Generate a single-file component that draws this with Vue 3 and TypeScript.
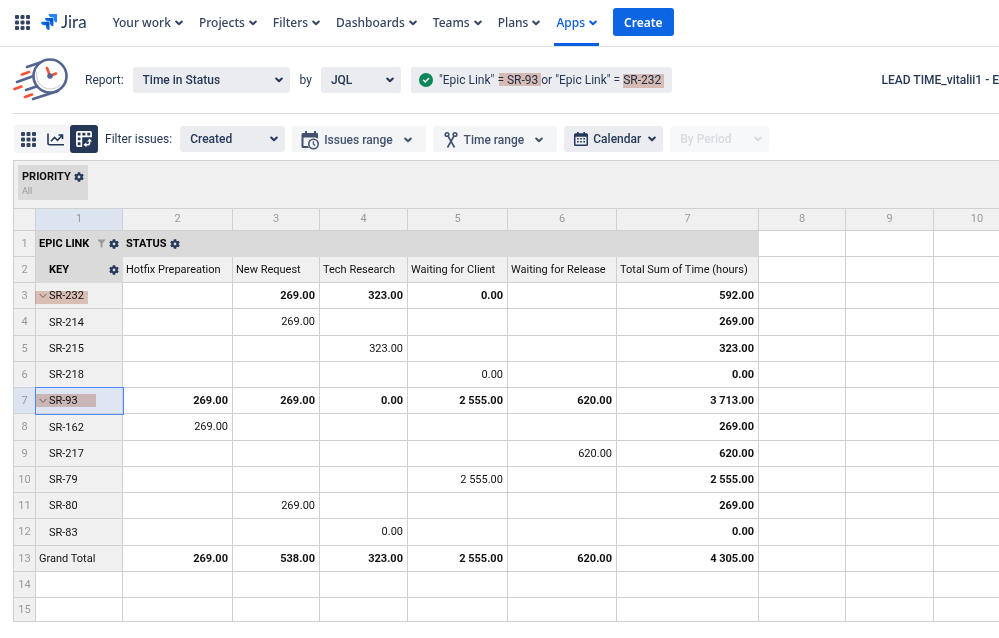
<script setup lang="ts">
import { ref } from 'vue'

interface Row {
  label: string
  kind: 'group' | 'item' | 'total'
  values: string[]
  mark?: string
  selected?: boolean
}

const navItems = ['Your work', 'Projects', 'Filters', 'Dashboards', 'Teams', 'Plans', 'Apps']
const activeNav = 'Apps'

const report = ref('Time in Status')
const source = ref('JQL')
const query = ref('"Epic Link" = SR-93 or "Epic Link" = SR-232')
const issueFilter = ref('Created')
const calendar = ref('Calendar')
const period = ref('By Period')

const columns = [1, 2, 3, 4, 5, 6, 7, 8, 9, 10]
const statuses = [
  'Hotfix Prepareation',
  'New Request',
  'Tech Research',
  'Waiting for Client',
  'Waiting for Release',
  'Total Sum of Time (hours)',
]

const rows: Row[] = [
  { label: 'SR-232', kind: 'group', mark: 'mark-first', values: ['', '269.00', '323.00', '0.00', '', '592.00'] },
  { label: 'SR-214', kind: 'item', values: ['', '269.00', '', '', '', '269.00'] },
  { label: 'SR-215', kind: 'item', values: ['', '', '323.00', '', '', '323.00'] },
  { label: 'SR-218', kind: 'item', values: ['', '', '', '0.00', '', '0.00'] },
  { label: 'SR-93', kind: 'group', mark: 'mark-second', selected: true, values: ['269.00', '269.00', '0.00', '2 555.00', '620.00', '3 713.00'] },
  { label: 'SR-162', kind: 'item', values: ['269.00', '', '', '', '', '269.00'] },
  { label: 'SR-217', kind: 'item', values: ['', '', '', '', '620.00', '620.00'] },
  { label: 'SR-79', kind: 'item', values: ['', '', '', '2 555.00', '', '2 555.00'] },
  { label: 'SR-80', kind: 'item', values: ['', '269.00', '', '', '', '269.00'] },
  { label: 'SR-83', kind: 'item', values: ['', '', '0.00', '', '', '0.00'] },
  { label: 'Grand Total', kind: 'total', values: ['269.00', '538.00', '323.00', '2 555.00', '620.00', '4 305.00'] },
]
const emptyRows = [14, 15]

const gearPath =
  'M6.200 1h3.600l.4 2 1.300.7 1.900-.7 1.700 3-1.500 1.300v1.400l1.500 1.300-1.700 3-1.900-.7-1.300.7-.4 2H6.200l-.4-2-1.300-.7-1.900.7-1.700-3L2.400 8.700V7.300L.900 6l1.700-3 1.900.7L5.800 3zM8 5.900a2.100 2.100 0 1 0 0 4.200 2.100 2.100 0 0 0 0-4.200z'
</script>

<template>
  <div class="page">
    <header class="topbar">
      <button class="plain" aria-label="Switch apps">
        <svg class="dots" viewBox="0 0 15 15">
          <template v-for="y in 3" :key="y">
            <rect v-for="x in 3" :key="x" :x="(x - 1) * 5.5" :y="(y - 1) * 5.5" width="4" height="4" rx="1" />
          </template>
        </svg>
      </button>
      <a class="brand" href="#">
        <svg class="brand-mark" viewBox="0 0 16 16">
          <defs>
            <linearGradient id="fade" x1="1" y1="0" x2="0" y2="1">
              <stop offset="0.2" stop-color="#0052cc" />
              <stop offset="0.8" stop-color="#2684ff" />
            </linearGradient>
          </defs>
          <path d="M15.500 0H7.800a3.500 3.500 0 0 0 3.500 3.500h1.400v1.400a3.500 3.500 0 0 0 3.500 3.400V.700a.7.7 0 0 0-.7-.7z" fill="#2684ff" />
          <path d="M11.700 3.900H4a3.500 3.500 0 0 0 3.500 3.400h1.400v1.400a3.500 3.500 0 0 0 3.500 3.500V4.600a.7.7 0 0 0-.7-.7z" fill="url(#fade)" />
          <path d="M7.800 7.700H.100a3.500 3.500 0 0 0 3.500 3.500H5v1.300A3.500 3.500 0 0 0 8.500 16V8.400a.7.7 0 0 0-.7-.7z" fill="url(#fade)" />
        </svg>
        <span>Jira</span>
      </a>
      <nav class="nav">
        <button v-for="item in navItems" :key="item" class="nav-item" :class="{ active: item === activeNav }">
          {{ item }}
          <svg class="chev" viewBox="0 0 8 8"><path d="M1.200 2.500 4 5.300l2.800-2.800" /></svg>
        </button>
      </nav>
      <button class="create">Create</button>
    </header>

    <section class="report-bar">
      <svg class="clock-logo" viewBox="0 0 56 44">
        <g fill="none" stroke-linecap="round" stroke-width="2.600">
          <g stroke="#53648f">
            <path d="M14 9 33 2.500M4 24l18-6.500M13 32l12-4M20 41l25-8" />
            <circle cx="37" cy="18" r="16.500" fill="#fff" />
          </g>
          <path d="M23.800 14a14 14 0 0 0 23 13.500" stroke="#c9cbd3" stroke-width="1" />
          <path d="M9 16.500l7-2.500M1.500 31l7-2.500M12 39l7-2.500M34 10l3 8M37 18l6-2.500" stroke="#ff5130" />
          <circle cx="37" cy="18" r="2.800" fill="#53648f" />
        </g>
      </svg>
      <label for="report" class="lead">Report:</label>
      <span class="picker wide">
        <select id="report" v-model="report"><option>Time in Status</option></select>
        <svg class="chev" viewBox="0 0 8 8"><path d="M1.200 2.500 4 5.300l2.800-2.800" /></svg>
      </span>
      <label for="source" class="lead">by</label>
      <span class="picker short">
        <select id="source" v-model="source"><option>JQL</option></select>
        <svg class="chev" viewBox="0 0 8 8"><path d="M1.200 2.500 4 5.300l2.800-2.800" /></svg>
      </span>
      <span class="query">
        <svg class="check" viewBox="0 0 14 14">
          <circle cx="7" cy="7" r="7" fill="#0a875a" />
          <path d="m4.500 7.200 1.800 1.700 3.300-3.400" fill="none" stroke="#fff" stroke-width="1.500" stroke-linecap="round" />
        </svg>
        <input v-model="query" type="text" aria-label="JQL query" />
        <i class="marker query-mark-a"></i>
        <i class="marker query-mark-b"></i>
      </span>
      <strong class="title">LEAD TIME_vitalii1 - E</strong>
    </section>

    <section class="toolbar">
      <div class="views">
        <button aria-label="Table view">
          <svg class="dots" viewBox="0 0 15 15">
            <template v-for="y in 3" :key="y">
              <rect v-for="x in 3" :key="x" :x="(x - 1) * 5.5" :y="(y - 1) * 5.5" width="4" height="4" rx="1" />
            </template>
          </svg>
        </button>
        <button aria-label="Chart view">
          <svg class="line-icon" viewBox="0 0 18 14">
            <path d="M1 1.500v9.500q0 1.700 1.700 1.700H17M4 9.300l3.500-4 3 3L15 3.500M11.500 3H15.500v4" />
          </svg>
        </button>
        <button class="on" aria-label="Pivot view">
          <svg class="pivot-icon" viewBox="0 0 17 17">
            <path
              fill="currentColor"
              fill-rule="evenodd"
              d="M1 2.500Q1 1 2.500 1h12Q16 1 16 2.500V6.800H6.800V16H2.500Q1 16 1 14.500zM2.600 2.600v2.700h2.600V2.600zM7 2.600v2.700h2.800V2.600zM11.600 2.600v2.700h2.800V2.600zM2.600 7v2.700h2.600V7zM2.600 11.500v2.900h2.600v-2.900z"
            />
            <path d="M9.500 14h2.300q2 0 2-2V9.700" fill="none" stroke="currentColor" stroke-width="1.400" />
            <path d="M8 14l2.800-2.300v4.600zM13.800 8l2.300 2.800h-4.600z" fill="currentColor" />
          </svg>
        </button>
      </div>
      <label for="filter">Filter issues:</label>
      <span class="picker medium">
        <select id="filter" v-model="issueFilter"><option>Created</option></select>
        <svg class="chev" viewBox="0 0 8 8"><path d="M1.200 2.500 4 5.300l2.800-2.800" /></svg>
      </span>
      <button class="range">
        <svg class="range-icon" viewBox="0 0 19 19">
          <path d="M4 0h2v2h7V0h2v2h1q1 0 1 1v4.500a7 7 0 0 0-2-.5V6.500H2.500V15H7a7 7 0 0 0 1 2H2q-1.500 0-1.500-1.500V3.500Q.500 2 2 2h2z" />
          <path d="M12.500 7.500a5.500 5.500 0 1 0 0 11 5.500 5.500 0 0 0 0-11zm0 1.600a3.900 3.900 0 1 1 0 7.800 3.900 3.900 0 0 1 0-7.800zm-.7 1.200v3.200l2 1.500.8-1-1.500-1.100v-2.600z" />
        </svg>
        Issues range
        <svg class="chev" viewBox="0 0 8 8"><path d="M1.200 2.500 4 5.300l2.800-2.800" /></svg>
      </button>
      <button class="range">
        <svg class="line-icon" viewBox="0 0 16 18">
          <circle cx="4" cy="3.500" r="1.800" /><circle cx="12" cy="3.500" r="1.800" />
          <path d="m5 5 6.500 11.500M11 5 4.500 16.500" />
        </svg>
        Time range
        <svg class="chev" viewBox="0 0 8 8"><path d="M1.200 2.500 4 5.300l2.800-2.800" /></svg>
      </button>
      <span class="picker with-icon">
        <svg class="cal" viewBox="0 0 14 14">
          <path fill-rule="evenodd" d="M3 0h1.600v1.300h4.800V0H11v1.300h1.500q1.500 0 1.500 1.500v9.700q0 1.500-1.500 1.500h-11Q0 14 0 12.500V2.800q0-1.500 1.500-1.500H3zM1.500 4.800v7.700h11V4.800z" />
          <path d="M3 6h1.700v1.600H3zM6.100 6h1.700v1.600H6.100zM9.300 6H11v1.600H9.300zM3 9h1.700v1.600H3zM6.100 9h1.700v1.600H6.100zM9.300 9H11v1.600H9.300z" />
        </svg>
        <select v-model="calendar" aria-label="Calendar"><option>Calendar</option></select>
        <svg class="chev" viewBox="0 0 8 8"><path d="M1.200 2.500 4 5.300l2.800-2.800" /></svg>
      </span>
      <span class="picker off">
        <select v-model="period" aria-label="Period" disabled><option>By Period</option></select>
        <svg class="chev" viewBox="0 0 8 8"><path d="M1.200 2.500 4 5.300l2.800-2.800" /></svg>
      </span>
    </section>

    <main class="pivot">
      <div class="filters">
        <div class="chip">
          <div class="chip-name">
            PRIORITY
            <button class="plain" aria-label="Priority settings">
              <svg class="gear" viewBox="0.500 0.500 15 15"><path fill-rule="evenodd" :d="gearPath" /></svg>
            </button>
          </div>
          <div class="chip-value">All</div>
        </div>
      </div>

      <table class="grid">
        <colgroup>
          <col class="w-index" />
          <col v-for="c in columns" :key="c" :class="'w-' + c" />
        </colgroup>
        <thead>
          <tr>
            <th></th>
            <th v-for="c in columns" :key="c" scope="col" :class="{ lit: c === 1 }">{{ c }}</th>
          </tr>
        </thead>
        <tbody>
          <tr>
            <th class="index">1</th>
            <th class="field">
              <div class="field-row">
                <span class="grow">EPIC LINK</span>
                <svg class="funnel" viewBox="0 0 10 10"><path d="M.500.500h9L6 5v4.500H4V5z" /></svg>
                <button class="plain" aria-label="Epic link settings">
                  <svg class="gear" viewBox="0.500 0.500 15 15"><path fill-rule="evenodd" :d="gearPath" /></svg>
                </button>
              </div>
            </th>
            <th class="field" colspan="6">
              <div class="field-row">
                STATUS
                <button class="plain" aria-label="Status settings">
                  <svg class="gear" viewBox="0.500 0.500 15 15"><path fill-rule="evenodd" :d="gearPath" /></svg>
                </button>
              </div>
            </th>
            <td v-for="c in 3" :key="c"></td>
          </tr>
          <tr>
            <th class="index">2</th>
            <th class="field">
              <div class="field-row">
                <span class="grow indent">KEY</span>
                <button class="plain" aria-label="Key settings">
                  <svg class="gear" viewBox="0.500 0.500 15 15"><path fill-rule="evenodd" :d="gearPath" /></svg>
                </button>
              </div>
            </th>
            <th v-for="s in statuses" :key="s" class="label" scope="col">{{ s }}</th>
            <td v-for="c in 3" :key="c"></td>
          </tr>
          <tr v-for="(row, i) in rows" :key="row.label" :class="row.kind">
            <th class="index" :class="{ lit: row.selected }">{{ i + 3 }}</th>
            <th class="label" :class="{ selected: row.selected }" scope="row">
              <div class="label-row">
                <button v-if="row.kind === 'group'" class="toggle" :aria-label="'Collapse ' + row.label">
                  <svg viewBox="0 0 8 8"><path d="M.700 2 4 5.500 7.300 2" /></svg>
                </button>
                <span>{{ row.label }}</span>
                <i v-if="row.mark" class="marker" :class="row.mark"></i>
              </div>
            </th>
            <td v-for="(v, n) in row.values" :key="n">{{ v }}</td>
            <td v-for="c in 3" :key="'x' + c"></td>
          </tr>
          <tr v-for="n in emptyRows" :key="n">
            <th class="index">{{ n }}</th>
            <td v-for="c in columns" :key="c"></td>
          </tr>
        </tbody>
      </table>
    </main>
  </div>
</template>

<style>
body {
  margin: 0;
  background: #fff;
}
</style>

<style scoped>
* {
  box-sizing: border-box;
}
.page {
  overflow: hidden;
  font-family: Roboto, 'Liberation Sans', sans-serif;
  font-size: 12px;
  color: #253858;
}
button,
select,
input {
  font: inherit;
  color: inherit;
  border: 0;
  background: none;
  padding: 0;
  margin: 0;
}
svg {
  display: block;
  flex: none;
}
.plain {
  display: flex;
}
.dots {
  width: 15px;
  height: 15px;
  fill: #344563;
}
.chev {
  width: 8px;
  height: 8px;
  fill: none;
  stroke: currentColor;
  stroke-width: 2;
  stroke-linecap: round;
  stroke-linejoin: round;
}

.topbar {
  display: flex;
  align-items: center;
  height: 47px;
  padding: 0 15px 2px;
  border-bottom: 1px solid #dfe2e5;
}
.brand {
  display: flex;
  align-items: center;
  gap: 4px;
  margin-left: 11px;
  color: #253858;
  font-family: Lato, sans-serif;
  font-size: 17px;
  line-height: 20px;
  text-decoration: none;
}
.brand-mark {
  width: 16px;
  height: 16px;
}
.nav {
  display: flex;
  gap: 12px;
  height: 46px;
  margin: 2px 0 0 24px;
}
.nav-item {
  display: flex;
  align-items: center;
  gap: 4px;
  padding: 2px 2px 0;
  border-bottom: 3px solid transparent;
  font-family: 'Noto Sans', sans-serif;
  font-size: 12px;
  font-weight: 500;
  color: #344563;
}
.nav-item.active {
  color: #0c5ce0;
  border-color: #0c5ce0;
}
.create {
  height: 28px;
  margin-left: 14px;
  padding: 0 11px;
  border-radius: 3px;
  background: #0c66e4;
  color: #fff;
  font-family: 'Noto Sans', sans-serif;
  font-size: 12px;
  font-weight: 600;
}

.report-bar {
  display: flex;
  align-items: center;
  height: 67px;
  margin-left: 13px;
  border-bottom: 1px solid #d9d9d9;
}
.clock-logo {
  width: 56px;
  height: 44px;
  margin-right: 16px;
}
.lead {
  margin-right: 9px;
}
.picker {
  display: flex;
  align-items: center;
  height: 26px;
  margin-right: 10px;
  padding: 0 7px 0 10px;
  border-radius: 3px;
  background: #ebecf0;
  font-weight: 500;
}
.picker select {
  flex: 1;
  min-width: 0;
  height: 26px;
  appearance: none;
  outline: 0;
}
.wide {
  width: 157px;
}
.short {
  width: 80px;
}
.medium {
  width: 105px;
}
.query {
  position: relative;
  display: flex;
  align-items: center;
  gap: 6px;
  width: 261px;
  height: 26px;
  padding: 0 4px 0 8px;
  border-radius: 3px;
  background: #ebecf0;
}
.check {
  width: 14px;
  height: 14px;
}
.query input {
  flex: 1;
  min-width: 0;
  outline: 0;
}
.marker {
  position: absolute;
  background: #e7cac0;
  mix-blend-mode: multiply;
  pointer-events: none;
}
.query-mark-a {
  left: 88px;
  top: 6px;
  width: 42px;
  height: 13px;
}
.query-mark-b {
  left: 212px;
  top: 7px;
  width: 41px;
  height: 14px;
}
.title {
  margin-left: auto;
  font-weight: 500;
  white-space: nowrap;
}

.toolbar {
  display: flex;
  align-items: center;
  gap: 7px;
  height: 46px;
  padding: 4px 14px 0;
}
.toolbar label {
  padding-right: 1px;
}
.toolbar .picker {
  margin: 0;
}
.views {
  display: flex;
  border-radius: 3px;
  background: #f4f5f7;
}
.views button {
  display: flex;
  align-items: center;
  justify-content: center;
  width: 28px;
  height: 28px;
  border-radius: 3px;
}
.views .on {
  background: #253858;
  color: #fff;
}
.pivot-icon {
  width: 18px;
  height: 18px;
}
.line-icon {
  width: 18px;
  height: 18px;
  fill: none;
  stroke: currentColor;
  stroke-width: 1.6;
}
.range {
  display: flex;
  align-items: center;
  gap: 4px;
  height: 26px;
  padding: 2px 14px 0 9px;
  border-radius: 3px;
  background: #f4f5f7;
  color: #42526e;
  font-weight: 500;
}
.range .chev {
  margin-left: 7px;
}
.range-icon {
  width: 19px;
  height: 19px;
  fill: #42526e;
  fill-rule: evenodd;
}
.with-icon {
  gap: 5px;
  width: 99px;
}
.cal {
  width: 14px;
  height: 14px;
  fill: #253858;
  fill-rule: evenodd;
}
.off {
  width: 99px;
  background: #f7f8f9;
  color: #d9dbe0;
}
.off select {
  opacity: 1;
}

.pivot {
  margin-left: 13px;
  border-left: 1px solid #d0d0d0;
  color: #111;
  font-size: 11px;
}
.filters {
  display: flex;
  height: 49px;
  padding: 4px;
  border-top: 1px solid #d0d0d0;
  border-bottom: 1px solid #d0d0d0;
  background: #f0f0f0;
}
.chip {
  height: 35px;
  padding: 4px 4px 0 4px;
  background: #dadada;
}
.chip-name {
  display: flex;
  align-items: center;
  gap: 3px;
  font-weight: 700;
  line-height: 16px;
}
.chip-value {
  color: #999;
  font-size: 9px;
  line-height: 12px;
}
.gear {
  width: 10px;
  height: 10px;
  fill: #253858;
}
.grid {
  width: 1007px;
  table-layout: fixed;
  border-collapse: separate;
  border-spacing: 0;
}
.w-index {
  width: 22px;
}
.w-1,
.w-3,
.w-8,
.w-10 {
  width: 87px;
}
.w-4,
.w-9 {
  width: 88px;
}
.w-2 {
  width: 110px;
}
.w-6 {
  width: 109px;
}
.w-5 {
  width: 100px;
}
.w-7 {
  width: 142px;
}
.grid th,
.grid td {
  height: 26px;
  padding: 0 4px 0 3px;
  border-right: 1px solid #d0d0d0;
  border-bottom: 1px solid #d0d0d0;
  line-height: 14px;
  white-space: nowrap;
}
.grid td {
  text-align: right;
}
.grid tbody tr:nth-child(4n) > * {
  height: 27px;
}
.grid tbody tr:last-child > * {
  height: 24px;
}
.grid thead th,
.grid .index {
  padding: 0;
  background: #f0f0f0;
  color: #999;
  font-weight: 400;
  text-align: center;
}
.grid thead th {
  height: 22px;
  padding-bottom: 1px;
}
.grid thead .lit,
.grid .index.lit {
  background: #dce4f1;
}
.grid .field {
  padding-right: 3px;
  border-color: #dadada;
  background: #dadada;
  color: #000;
  font-weight: 700;
  text-align: left;
}
.field-row {
  display: flex;
  align-items: center;
  gap: 3px;
}
.grow {
  flex: 1;
}
.indent {
  padding-left: 10px;
}
.funnel {
  width: 9px;
  height: 9px;
  fill: #999;
}
.grid .label {
  background: #f0f0f0;
  font-weight: 400;
  text-align: left;
}
.grid tr .label {
  padding-top: 1px;
}
.label-row {
  position: relative;
  display: flex;
  align-items: center;
}
.item .label-row {
  padding-left: 10px;
}
.toggle {
  width: 10px;
}
.toggle svg {
  width: 8px;
  height: 8px;
  fill: none;
  stroke: #777;
}
.grid .selected {
  outline: 1px solid #4b89ff;
  background: #dfe6f3;
}
.mark-first {
  left: -4px;
  top: 2px;
  width: 53px;
  height: 13px;
}
.mark-second {
  left: -3px;
  top: 0;
  width: 60px;
  height: 13px;
}
.group td,
.total td,
.item td:nth-child(8) {
  font-weight: 700;
}
</style>
